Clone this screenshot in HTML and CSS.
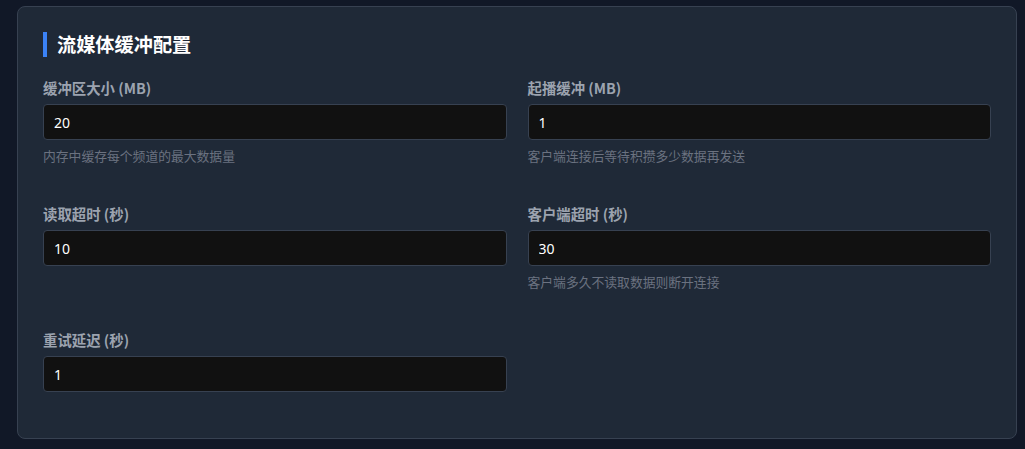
FILE: index.html
```html
<!DOCTYPE html>
<html lang="zh-CN">
<head>
<meta charset="utf-8">
<title>流媒体缓冲配置</title>
<link rel="stylesheet" href="styles.css">
</head>
<body>
<div class="page">
  <section class="card">
    <h2 class="card-title">流媒体缓冲配置</h2>
    <div class="form-grid">
      <div class="form-group">
        <label class="form-label">缓冲区大小 (MB)</label>
        <input class="form-input" type="text" value="20">
        <div class="form-help">内存中缓存每个频道的最大数据量</div>
      </div>
      <div class="form-group">
        <label class="form-label">起播缓冲 (MB)</label>
        <input class="form-input" type="text" value="1">
        <div class="form-help">客户端连接后等待积攒多少数据再发送</div>
      </div>
      <div class="form-group">
        <label class="form-label">读取超时 (秒)</label>
        <input class="form-input" type="text" value="10">
      </div>
      <div class="form-group">
        <label class="form-label">客户端超时 (秒)</label>
        <input class="form-input" type="text" value="30">
        <div class="form-help">客户端多久不读取数据则断开连接</div>
      </div>
      <div class="form-group">
        <label class="form-label">重试延迟 (秒)</label>
        <input class="form-input" type="text" value="1">
      </div>
    </div>
  </section>
</div>
</body>
</html>
```
FILE: styles.css
```css
html, body {
  margin: 0;
  padding: 0;
  background: #111827;
  font-family: "Segoe UI", "Noto Sans", "Noto Sans CJK SC", sans-serif;
}

.page {
  padding: 6px 9px 0 17px;
}

.card {
  box-sizing: border-box;
  width: 1000px;
  background: #1f2937;
  border: 1px solid #374151;
  border-radius: 8px;
  padding: 25px 25px 26px 25px;
}

.card-title {
  margin: 0 0 20px 0;
  border-left: 4px solid #3b82f6;
  padding-left: 10px;
  font-size: 19.2px;
  line-height: 25px;
  font-weight: 700;
  color: #ffffff;
  font-family: "Noto Sans CJK SC", sans-serif;
}

.form-grid {
  display: grid;
  grid-template-columns: 1fr 1fr;
  column-gap: 21px;
  row-gap: 18px;
}

.form-group {
  display: flex;
  flex-direction: column;
  margin-bottom: 20px;
}

.form-label {
  font-size: 14.4px;
  line-height: 21px;
  font-weight: 700;
  color: #9ca3af;
  margin-bottom: 6px;
  font-family: "Noto Sans CJK SC", sans-serif;
}

.form-input {
  box-sizing: border-box;
  height: 36px;
  width: 100%;
  background: #111111;
  border: 1px solid #374151;
  border-radius: 4px;
  padding: 0 10px;
  color: #ffffff;
  font-size: 14px;
  font-family: "Noto Sans", "Noto Sans CJK SC", sans-serif;
  outline: none;
}

.form-help {
  margin-top: 6px;
  font-size: 12.8px;
  line-height: 19px;
  color: #6b7280;
  font-family: "Noto Sans CJK SC", sans-serif;
}
```
